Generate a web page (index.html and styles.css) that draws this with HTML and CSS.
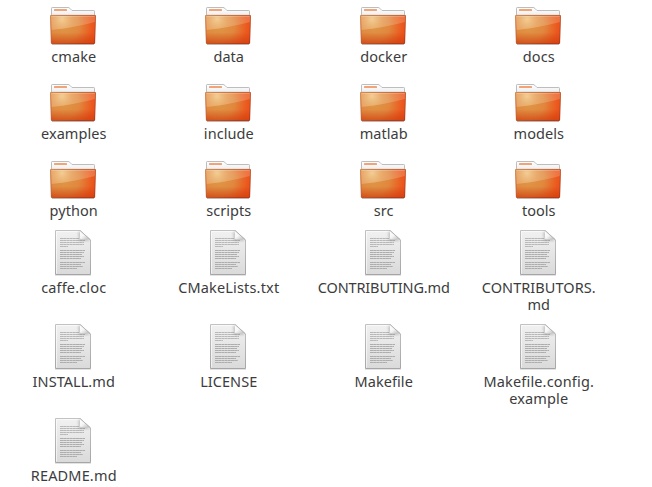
FILE: index.html
```html
<!DOCTYPE html>
<html lang="en">
<head>
<meta charset="utf-8">
<title>caffe</title>
<link rel="stylesheet" href="styles.css">
</head>
<body>
<svg class="defs" width="0" height="0" aria-hidden="true">
  <defs>
    <radialGradient id="front" gradientUnits="userSpaceOnUse" cx="16" cy="28" r="34">
      <stop offset="0" stop-color="#df9746"/><stop offset=".45" stop-color="#e1873e"/><stop offset=".85" stop-color="#ec561c"/><stop offset="1" stop-color="#ee4f1a"/>
    </radialGradient>
    <radialGradient id="glow" gradientUnits="userSpaceOnUse" cx="14" cy="21" r="22">
      <stop offset="0" stop-color="#f7d9a2" stop-opacity=".8"/><stop offset=".5" stop-color="#efbd82" stop-opacity=".3"/><stop offset="1" stop-color="#e8a060" stop-opacity="0"/>
    </radialGradient>
    <linearGradient id="shade" x1="0" y1="0" x2="0" y2="1">
      <stop offset=".6" stop-color="#c83c0c" stop-opacity="0"/><stop offset="1" stop-color="#cc3c0c" stop-opacity=".65"/>
    </linearGradient>
    <linearGradient id="edge" x1="0" y1="0" x2=".7" y2="1">
      <stop offset="0" stop-color="#d48a54"/><stop offset="1" stop-color="#b03412"/>
    </linearGradient>
    <linearGradient id="tab" x1="0" y1="0" x2="0" y2="1">
      <stop offset="0" stop-color="#fff"/><stop offset=".65" stop-color="#f2f2f2"/><stop offset="1" stop-color="#bbb"/>
    </linearGradient>
    <linearGradient id="paper" x1="0" y1="0" x2="0" y2="1">
      <stop offset="0" stop-color="#f1f1f1"/><stop offset="1" stop-color="#dadada"/>
    </linearGradient>
    <linearGradient id="rim" x1="0" y1="0" x2="0" y2="1">
      <stop offset="0" stop-color="#c2c2c2"/><stop offset="1" stop-color="#a6a6a6"/>
    </linearGradient>
    <linearGradient id="curl" x1="0" y1="0" x2="1" y2="1">
      <stop offset="0" stop-color="#fff"/><stop offset=".45" stop-color="#f6f6f6"/><stop offset="1" stop-color="#b4b4b4"/>
    </linearGradient>
    <filter id="soft" x="-20%" y="-20%" width="140%" height="140%"><feGaussianBlur stdDeviation=".8"/></filter>
    <filter id="ground" filterUnits="userSpaceOnUse" x="0" y="40" width="51" height="10"><feGaussianBlur stdDeviation=".7"/></filter>
    <symbol id="folder" viewBox="0 0 51 50">
      <path d="M4 46h42" stroke="#777" stroke-width="1.500" opacity=".6" filter="url(#ground)"/>
      <path d="M3.500 19V10.200q0-.7.7-.7H20q1.100 0 1.800.8L24 12.500h21.800q.7 0 .7.7V19z" fill="url(#tab)" stroke="#bdbdbd"/>
      <rect x="6" y="11" width="13" height="2" rx=".5" fill="#f0a478"/>
      <path d="M2.500 17.500h45L46.600 45q0 .6-.6.6H4q-.6 0-.6-.6z" fill="url(#front)"/>
      <path d="M2.500 17.500h45L46.600 45q0 .6-.6.6H4q-.6 0-.6-.6z" fill="url(#shade)"/>
      <path d="M3 18h44v6Q29 29 3.300 32z" fill="#fbe6d0" opacity=".22"/>
      <path d="M3 18h44v6Q29 29 3.300 32z" fill="url(#glow)"/>
      <path d="M3.500 18.500h43" stroke="#fff" opacity=".2"/>
      <path d="M2.500 17.500h45L46.600 45q0 .6-.6.6H4q-.6 0-.6-.6z" fill="none" stroke="url(#edge)"/>
    </symbol>
    <symbol id="file" viewBox="0 0 51 50">
      <path d="M7 46.300h36" stroke="#777" stroke-width="1" opacity=".25" filter="url(#ground)"/>
      <path d="M7.500 1.500H32L42.500 11v34.500h-35z" fill="url(#paper)" stroke="url(#rim)"/>
      <path d="M8.500 44.500v-42H31" fill="none" stroke="#fff" opacity=".6"/>
      <path d="M12 9.500h19M12 11.500h25M12 13.500h24M12 15.500h24M12 17.500h8" stroke="#b8b8b8" stroke-dasharray="3 .2"/>
      <path d="M12 21.500h25M12 23.500h24M12 25.500h22M12 27.500h24M12 29.500h21M12 33.500h25M12 35.500h21M12 37.500h23M12 39.500h17" stroke="#adadad" stroke-dasharray="3 .2"/>
      <path d="M30 3h3l9 9H31z" fill="#777" opacity=".35" filter="url(#soft)"/>
      <path d="M32 1.800V9q0 1.300 1.300 1.300H42z" fill="url(#curl)"/>
      <path d="M32 1.500l10.500 9.500" stroke="#b4b4b4"/>
    </symbol>
  </defs>
</svg>
<main class="files">
  <div class="item"><svg class="icon"><use href="#folder"/></svg><span class="name">cmake</span></div>
  <div class="item"><svg class="icon"><use href="#folder"/></svg><span class="name">data</span></div>
  <div class="item"><svg class="icon"><use href="#folder"/></svg><span class="name">docker</span></div>
  <div class="item"><svg class="icon"><use href="#folder"/></svg><span class="name">docs</span></div>
  <div class="item"><svg class="icon"><use href="#folder"/></svg><span class="name">examples</span></div>
  <div class="item"><svg class="icon"><use href="#folder"/></svg><span class="name">include</span></div>
  <div class="item"><svg class="icon"><use href="#folder"/></svg><span class="name">matlab</span></div>
  <div class="item"><svg class="icon"><use href="#folder"/></svg><span class="name">models</span></div>
  <div class="item"><svg class="icon"><use href="#folder"/></svg><span class="name">python</span></div>
  <div class="item"><svg class="icon"><use href="#folder"/></svg><span class="name">scripts</span></div>
  <div class="item"><svg class="icon"><use href="#folder"/></svg><span class="name">src</span></div>
  <div class="item"><svg class="icon"><use href="#folder"/></svg><span class="name">tools</span></div>
  <div class="item"><svg class="icon"><use href="#file"/></svg><span class="name wide">caffe.cloc</span></div>
  <div class="item"><svg class="icon"><use href="#file"/></svg><span class="name wide">CMakeLists.txt</span></div>
  <div class="item"><svg class="icon"><use href="#file"/></svg><span class="name tight">CONTRIBUTING.md</span></div>
  <div class="item"><svg class="icon"><use href="#file"/></svg><span class="name">CONTRIBUTORS.<br>md</span></div>
  <div class="item"><svg class="icon"><use href="#file"/></svg><span class="name">INSTALL.md</span></div>
  <div class="item"><svg class="icon"><use href="#file"/></svg><span class="name">LICENSE</span></div>
  <div class="item"><svg class="icon"><use href="#file"/></svg><span class="name">Makefile</span></div>
  <div class="item"><svg class="icon"><use href="#file"/></svg><span class="name wide">Makefile.config.<br>example</span></div>
  <div class="item"><svg class="icon"><use href="#file"/></svg><span class="name wide">README.md</span></div>
</main>
</body>
</html>
```
FILE: styles.css
```css
body {
  margin: 0;
  background: #fff;
  color: #3c3c3c;
  font: 14.5px/17px "Noto Sans", "Open Sans", sans-serif;
  overflow: hidden;
}

.defs {
  display: block;
}

.files {
  display: grid;
  grid-template-columns: repeat(4, 155px);
  row-gap: 10px;
  margin: -2px 0 0 -4px;
}

.item {
  display: flex;
  flex-direction: column;
  align-items: center;
}

.icon {
  width: 51px;
  height: 50px;
}

.name {
  padding-left: 0.5px;
  text-align: center;
  white-space: nowrap;
  font-variant-ligatures: none;
  letter-spacing: 0.05px;
}

.tight {
  letter-spacing: -0.15px;
}

.wide {
  letter-spacing: 0.16px;
}
```
